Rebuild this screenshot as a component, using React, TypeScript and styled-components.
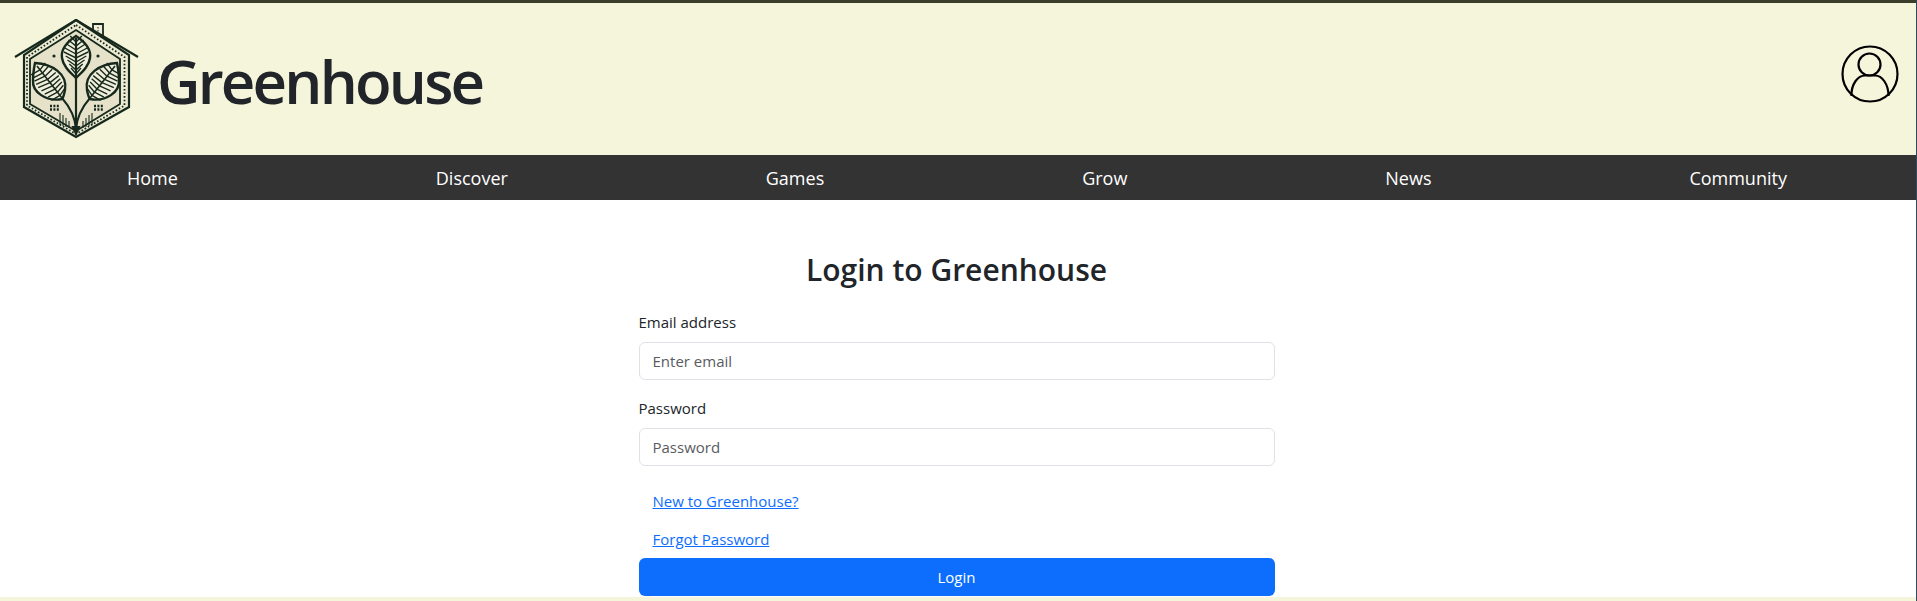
import React from 'react';
import styled, { createGlobalStyle } from 'styled-components';

const GlobalStyle = createGlobalStyle`
  html, body {
    margin: 0;
    padding: 0;
    background: #f5f5dc;
    font-family: "Open Sans", "Noto Sans", sans-serif;
    color: #212529;
  }
  * { box-sizing: border-box; }
`;

const navItems = ['Home', 'Discover', 'Games', 'Grow', 'News', 'Community'];

const Page = styled.div`
  width: 100%;
  height: 601px;
  overflow: hidden;
  display: flex;
  flex-direction: column;
  border-right: 1px solid #2f4a5f;
`;

const Header = styled.header`
  height: 155px;
  border-top: 3px solid #3a3d2a;
  background: #f5f5dc;
  display: flex;
  align-items: center;
  justify-content: space-between;
  padding: 0 17px 0 14px;
`;

const Brand = styled.div`
  display: flex;
  align-items: center;
  gap: 17px;
`;

const Title = styled.h1`
  margin: 4px 0 0;
  font-size: 60px;
  font-weight: 600;
  line-height: 1.2;
  letter-spacing: -2.8px;
  color: #212529;
`;

const Nav = styled.nav`
  height: 45px;
  background: #333333;
  display: flex;
  align-items: center;
  justify-content: space-between;
  padding: 0 129px 0 127px;
`;

const NavLink = styled.a`
  color: #ffffff;
  font-size: 18px;
  text-decoration: none;
`;

const Main = styled.main`
  background: #ffffff;
  height: 397px;
  display: flex;
  flex-direction: column;
  align-items: center;
  padding: 52px 3px 0 0;
`;

const Heading = styled.h2`
  margin: 0 0 22px;
  font-size: 30px;
  font-weight: 600;
  line-height: 36px;
`;

const Form = styled.form`
  width: 636px;
  display: flex;
  flex-direction: column;
`;

const Field = styled.div`
  margin-bottom: 16px;
`;

const Label = styled.label`
  display: block;
  font-size: 15px;
  line-height: 24px;
  margin-bottom: 8px;
`;

const Input = styled.input`
  display: block;
  width: 100%;
  height: 38px;
  padding: 6px 13px;
  font-family: inherit;
  font-size: 15px;
  border: 1px solid #dee2e6;
  border-radius: 6px;
  background: #fff;
  &::placeholder { color: #595c5f; opacity: 1; }
`;

const LinkRow = styled.div`
  padding: 8px 14px;
  line-height: 22px;
`;

const TextLink = styled.a`
  color: #0d6efd;
  font-size: 15px;
  text-decoration: underline;
`;

const Submit = styled.button`
  height: 38px;
  background: #0d6efd;
  color: #fff;
  border: 0;
  border-radius: 6px;
  font-family: inherit;
  font-size: 15px;
`;

const UserSvg = styled.svg`
  margin-bottom: 10px;
`;

const INK = '#16291c';

// veins of the middle leaf, going up the midrib
const centerVeins = [42, 46, 50, 54, 58, 62, 66, 70, 74];
// veins of the side leaves, measured along the midrib
const sideVeins = [0.12, 0.22, 0.32, 0.42, 0.52, 0.62, 0.72, 0.82, 0.92];

const SideLeaf = ({ flip }: { flip?: boolean }) => (
  <g transform={flip ? 'matrix(-1 0 0 1 152 0)' : undefined}>
    <path d="M35 63 C52 64 68 74 65 90 C64 95 63 98 62 99 C46 102 32 92 33 80 C33 74 34 68 35 63 Z" fill="#f1efdc" strokeWidth="2.4" />
    <path d="M37 66 L62 98" strokeWidth="1.6" />
    {sideVeins.map((t) => {
      const x = 37 + 25 * t;
      const y = 66 + 32 * t;
      return (
        <g key={t}>
          <path d={`M${x} ${y} L${x - 4 - 8 * (1 - Math.abs(t - 0.5))} ${y + 5}`} strokeWidth="1.4" />
          <path d={`M${x} ${y} L${x + 9 * (1 - Math.abs(t - 0.5) * 1.1)} ${y - 7}`} strokeWidth="1.4" />
        </g>
      );
    })}
    <path d="M62 98 C69 106 75 116 76 129" strokeWidth="2" />
  </g>
);

const Logo = () => (
  <svg width="126" height="120" viewBox="14 19 126 120" fill="none" stroke={INK} strokeWidth="2">
    <path d="M93 32 V24 H103 V40" fill="#f1efdc" strokeWidth="1.8" />
    <path d="M98 27 V36" strokeWidth="1" strokeDasharray="1.5 1.5" />
    <path d="M76 20 L129 55 V107 L76 137 L24 107 V55 Z" fill="#ecead3" strokeWidth="2.2" />
    <path d="M15 57 L76 20 L138 57" strokeWidth="2.2" />
    <path d="M76 30 L120 59 V104 L76 131 L30 104 V59 Z" fill="#e6e2ca" strokeWidth="1.8" />
    <path d="M76 25 L124.5 57 V105.5 L76 134 L27 105.5 V57 Z" strokeWidth="1.8" strokeDasharray="1.6 2" />
    <circle cx="54" cy="56" r="1.6" fill={INK} stroke="none" />
    <circle cx="98" cy="56" r="1.6" fill={INK} stroke="none" />
    <path d="M76 36 C88 44 91 52 90 58 C89 66 82 72 76 78 C70 72 63 66 62 58 C61 52 64 44 76 36 Z" fill="#f1efdc" strokeWidth="2.4" />
    {centerVeins.map((y) => (
      <path key={y} d={`M${80 + (y > 55 ? 76 - y : y - 38) * 0.45} ${y - 6} L76 ${y} L${72 - (y > 55 ? 76 - y : y - 38) * 0.45} ${y - 6}`} strokeWidth="1.4" />
    ))}
    <path d="M76 38 V128" strokeWidth="2.2" />
    <SideLeaf />
    <SideLeaf flip />
    <path d="M60 125 V113 M63 126 V115 M66 127 V118 M69 128 V121 M92 125 V113 M89 126 V115 M86 127 V118 M83 128 V121" strokeWidth="1.1" />
    <path d="M50 106 H59 M50 109.5 H59 M94 106 H103 M94 109.5 H103" strokeWidth="2.4" strokeDasharray="2 1.4" />
    <path d="M73 127 L76 134 L79 127 Z" fill={INK} />
  </svg>
);

const UserIcon = () => (
  <UserSvg width="58" height="58" viewBox="0 0 58 58" fill="none" stroke="#000" strokeWidth="2.2">
    <circle cx="29" cy="29" r="27.5" />
    <circle cx="28.5" cy="19.5" r="11" />
    <path d="M10.5 51 C10 39 17 30.5 24 30.5 H34 C41 30.5 47.5 39 47.5 51" />
  </UserSvg>
);

export default function App() {
  return (
    <Page>
      <GlobalStyle />
      <Header>
        <Brand>
          <Logo />
          <Title>Greenhouse</Title>
        </Brand>
        <UserIcon />
      </Header>
      <Nav>
        {navItems.map((item) => (
          <NavLink key={item} href="#">{item}</NavLink>
        ))}
      </Nav>
      <Main>
        <Heading>Login to Greenhouse</Heading>
        <Form onSubmit={(e) => e.preventDefault()}>
          <Field>
            <Label>Email address</Label>
            <Input type="email" placeholder="Enter email" />
          </Field>
          <Field>
            <Label>Password</Label>
            <Input type="password" placeholder="Password" />
          </Field>
          <LinkRow><TextLink href="#">New to Greenhouse?</TextLink></LinkRow>
          <LinkRow><TextLink href="#">Forgot Password</TextLink></LinkRow>
          <Submit type="submit">Login</Submit>
        </Form>
      </Main>
    </Page>
  );
}
